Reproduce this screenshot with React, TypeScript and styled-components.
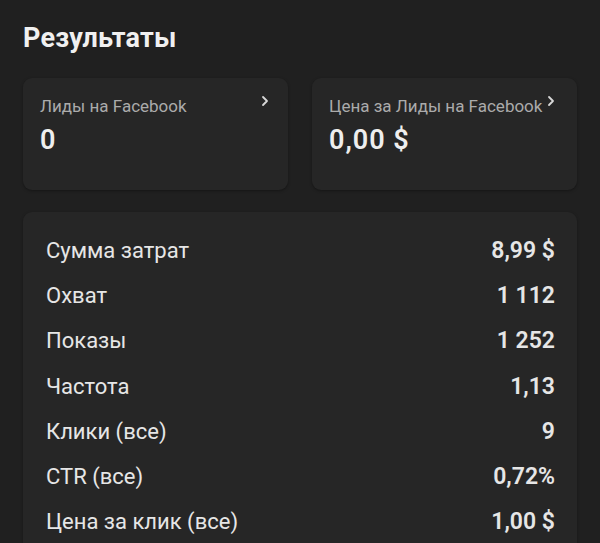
import React from 'react';
import styled, { createGlobalStyle } from 'styled-components';

const GlobalStyle = createGlobalStyle`
  html, body {
    margin: 0;
    padding: 0;
    background: #202020;
  }
  body {
    font-family: Roboto, 'Noto Sans', sans-serif;
    -webkit-font-smoothing: antialiased;
  }
`

const Page = styled.div`
  width: 600px;
  height: 543px;
  overflow: hidden;
  padding: 20px 23px 0 23px;
  box-sizing: border-box;
  background: #202020;
`

const Title = styled.h1`
  margin: 0;
  font-size: 27px;
  font-weight: 700;
  color: #f0f0f0;
  line-height: 36px;
  letter-spacing: 0.2px;
`

const CardGrid = styled.div`
  display: grid;
  grid-template-columns: 1fr 1fr;
  gap: 24px;
  margin-top: 22px;
`

const Card = styled.div`
  background: #262626;
  border-radius: 9px;
  box-shadow: 0 1px 3px rgba(0, 0, 0, 0.35);
`

const StatCard = styled(Card)`
  position: relative;
  height: 112px;
  padding: 16px 16px 0 17px;
  box-sizing: border-box;
`

const StatLabel = styled.div`
  font-size: 17px;
  color: #ababab;
  line-height: 22px;
  padding-top: 1px;
`

const StatValue = styled.div`
  font-size: 27px;
  font-weight: 600;
  color: #eeeeee;
  line-height: 32px;
  letter-spacing: 1px;
  margin-top: 7px;
`

const Chevron = styled.svg<{ $right: number }>`
  position: absolute;
  top: 16px;
  right: ${(p) => p.$right}px;
`

const TableCard = styled(Card)`
  margin-top: 22px;
  padding: 16px 22px 0 23px;
  min-height: 400px;
`

const Row = styled.div`
  display: flex;
  justify-content: space-between;
  align-items: center;
  height: 45.2px;
`

const RowLabel = styled.span`
  font-size: 22px;
  color: #e6e6e6;
`

const RowValue = styled.span`
  font-size: 23px;
  font-weight: 600;
  color: #e6e6e6;
`

const ChevronIcon = ({ right }: { right: number }) => (
  <Chevron $right={right} width="10" height="14" viewBox="0 0 10 14">
    <path d="M3 3 L7 7 L3 11" fill="none" stroke="#d8d8d8" strokeWidth="1.8" strokeLinecap="round" strokeLinejoin="round" />
  </Chevron>
)

const rows = [
  { label: 'Сумма затрат', value: '8,99 $' },
  { label: 'Охват', value: '1 112' },
  { label: 'Показы', value: '1 252' },
  { label: 'Частота', value: '1,13' },
  { label: 'Клики (все)', value: '9' },
  { label: 'CTR (все)', value: '0,72%' },
  { label: 'Цена за клик (все)', value: '1,00 $' },
]

function App() {
  return (
    <Page>
      <GlobalStyle />
      <Title>Результаты</Title>
      <CardGrid>
        <StatCard>
          <StatLabel>Лиды на Facebook</StatLabel>
          <StatValue>0</StatValue>
          <ChevronIcon right={18} />
        </StatCard>
        <StatCard>
          <StatLabel>Цена за Лиды на Facebook</StatLabel>
          <StatValue>0,00 $</StatValue>
          <ChevronIcon right={21} />
        </StatCard>
      </CardGrid>
      <TableCard>
        {rows.map((r) => (
          <Row key={r.label}>
            <RowLabel>{r.label}</RowLabel>
            <RowValue>{r.value}</RowValue>
          </Row>
        ))}
      </TableCard>
    </Page>
  )
}

export default App;
